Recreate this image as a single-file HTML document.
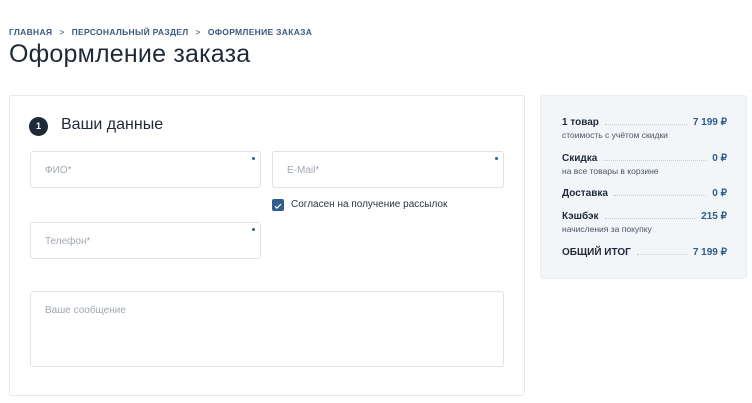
<!DOCTYPE html>
<html><head><meta charset="utf-8"><style>
*{box-sizing:border-box;margin:0;padding:0}
body{width:752px;height:403px;background:#fff;font-family:"Liberation Sans",sans-serif;color:#1e2a38;position:relative;overflow:hidden}
.a{position:absolute}
.bc{top:27px;left:9px;font-size:8.5px;font-weight:bold;letter-spacing:.3px;color:#3b5a80}
.bc span.s{margin:0 7px;color:#6b7c90}
h1{position:absolute;top:40px;left:9px;font-size:25px;font-weight:normal;color:#1e2a38;letter-spacing:.2px}
.card{left:9px;top:95px;width:516px;height:301px;border:1px solid #e6e9ee;border-radius:3px}
.num{left:29px;top:117px;width:19px;height:19px;border-radius:50%;background:#1e2a38;color:#fff;font-size:9px;font-weight:bold;text-align:center;line-height:19px}
.t2{left:61px;top:116px;font-size:16px}
.in{border:1px solid #dfe3e8;border-radius:3px;font-size:10px;color:#a0a8b3;padding-left:14px}
.in i{position:absolute;right:5px;top:5px;width:3px;height:3px;border-radius:50%;background:#2f5d8c}
.side{left:540px;top:95px;width:207px;height:184px;background:#f3f6f9;border:1px solid #e9edf1;border-radius:3px}
.r{position:absolute;left:21px;width:165px;font-size:10px;font-weight:bold;display:flex;align-items:baseline}
.r .d{flex:1;border-bottom:1px dotted #c5ccd5;margin:0 6px}
.r .v{color:#2f5d8c}
.sub{position:absolute;left:21px;font-size:8.5px;color:#4a5563}
</style></head><body>
<div class="a bc">ГЛАВНАЯ<span class="s">&gt;</span>ПЕРСОНАЛЬНЫЙ РАЗДЕЛ<span class="s">&gt;</span>ОФОРМЛЕНИЕ ЗАКАЗА</div>
<h1>Оформление заказа</h1>
<div class="a card"></div>
<div class="a num">1</div>
<div class="a t2">Ваши данные</div>
<div class="a in" style="left:30px;top:151px;width:231px;height:37px;line-height:37px">ФИО*<i></i></div>
<div class="a in" style="left:272px;top:151px;width:232px;height:37px;line-height:37px">E-Mail*<i></i></div>
<div class="a" style="left:272px;top:199px;width:12px;height:12px;background:#2f5d8c;border-radius:2px"><svg width="12" height="12"><path d="M3 6.2l2 2 4-4.2" stroke="#fff" stroke-width="1.2" fill="none"/></svg></div>
<div class="a" style="left:291px;top:199px;font-size:10px;color:#2a3440">Согласен на получение рассылок</div>
<div class="a in" style="left:30px;top:222px;width:231px;height:37px;line-height:37px">Телефон*<i></i></div>
<div class="a in" style="left:30px;top:291px;width:474px;height:76px;padding-top:12px;line-height:14px">Ваше сообщение</div>
<div class="a side">
<div class="r" style="top:21px">1 товар<span class="d"></span><span class="v">7 199 ₽</span></div>
<div class="sub" style="top:34px">стоимость с учётом скидки</div>
<div class="r" style="top:57px">Скидка<span class="d"></span><span class="v">0 ₽</span></div>
<div class="sub" style="top:70px">на все товары в корзине</div>
<div class="r" style="top:92px">Доставка<span class="d"></span><span class="v">0 ₽</span></div>
<div class="r" style="top:115px">Кэшбэк<span class="d"></span><span class="v">215 ₽</span></div>
<div class="sub" style="top:128px">начисления за покупку</div>
<div class="r" style="top:151px">ОБЩИЙ ИТОГ<span class="d"></span><span class="v">7 199 ₽</span></div>
</div>
</body></html>
